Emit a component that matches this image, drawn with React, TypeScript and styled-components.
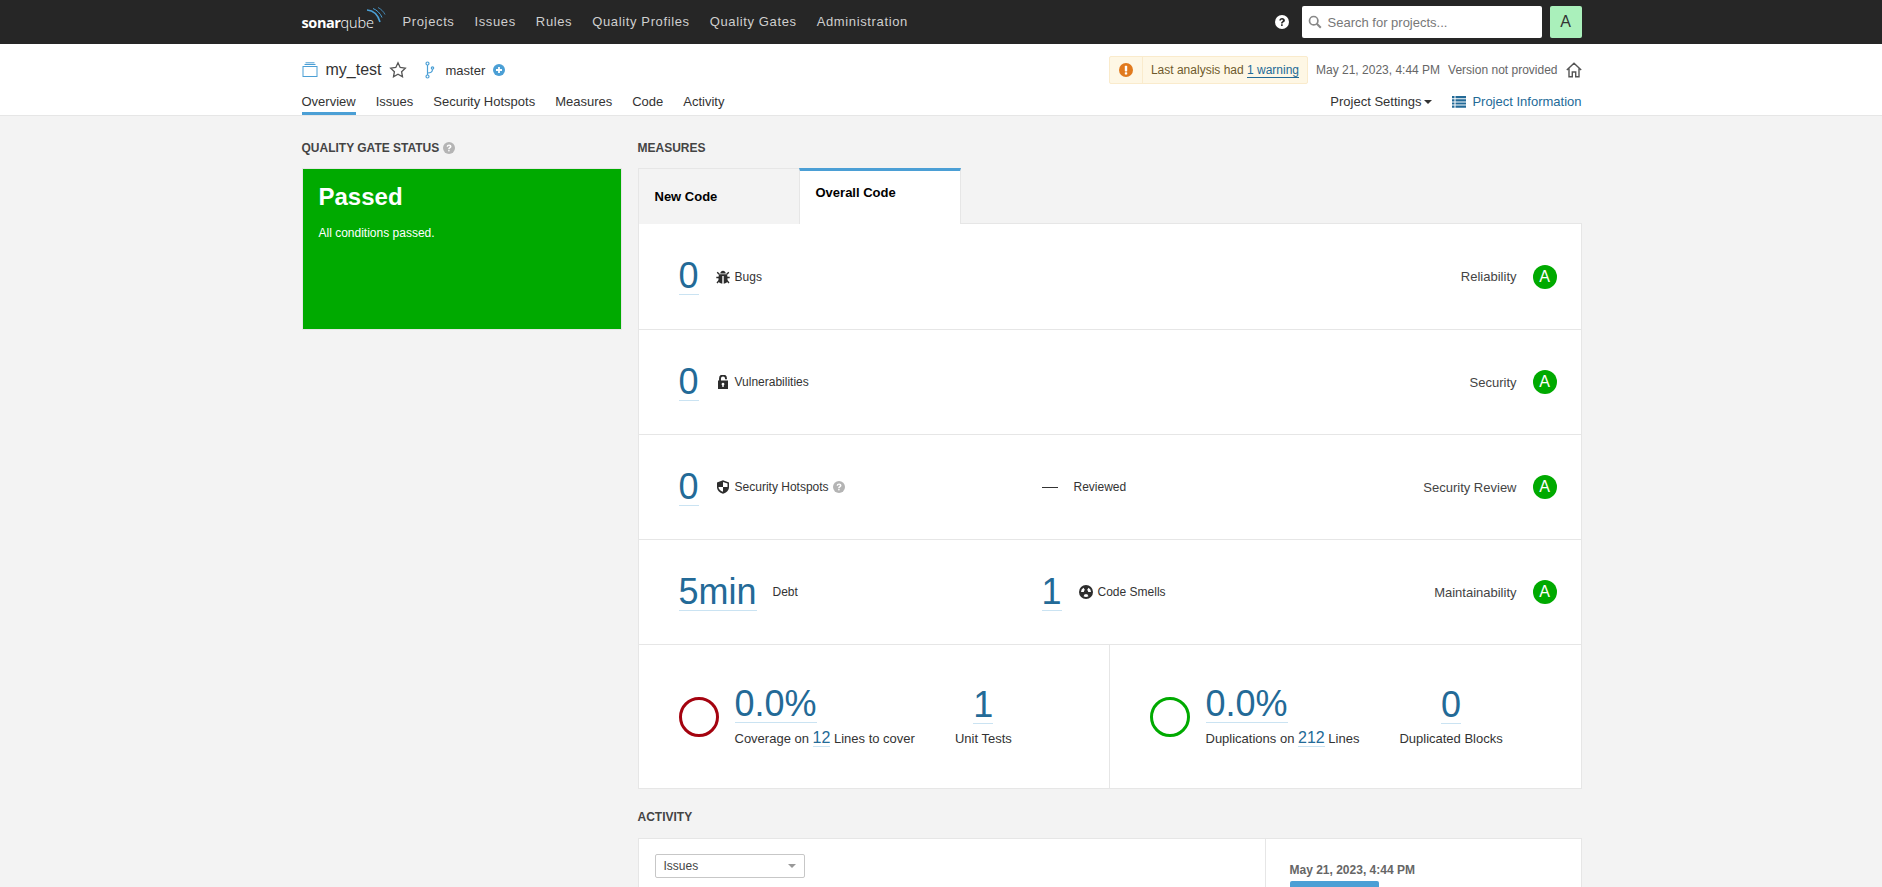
import React from "react";
import styled, { createGlobalStyle } from "styled-components";

const Global = createGlobalStyle`
  html, body { margin: 0; padding: 0; height: 887px; overflow: hidden; background: #f3f3f3; }
  body { font-family: "Liberation Sans", Arial, sans-serif; font-size: 12px; color: #333; }
  * { box-sizing: border-box; }
`;

const Wrap = styled.div`width: 1280px; margin-left: 301.5px;`;
const TopBar = styled.div`height: 44px; background: #262626;`;
const TopInner = styled(Wrap)`display: flex; align-items: center; height: 44px;`;
const Logo = styled.div`position: relative; display: flex; align-items: baseline; width: 83px; height: 44px; margin-right: 8px; padding-top: 14px; color: #fff; font-family: "Open Sans", sans-serif; font-size: 14.5px; line-height: 18px; letter-spacing: -0.4px;`;
const LogoSonar = styled.span`font-weight: 700;`;
const LogoQube = styled.span`font-weight: 300; letter-spacing: -0.1px;`;
const Waves = styled.svg`position: absolute; left: 64px; top: 7px;`;
const TopLink = styled.a`padding: 0 10px; font-size: 13px; letter-spacing: 0.63px; color: #cfcfcf; line-height: 44px;`;
const Spacer = styled.div`flex: 1;`;
const Search = styled.div`display: flex; align-items: center; gap: 6px; width: 240px; height: 32px; margin-left: 13px; padding-left: 6px; background: #fff; border-radius: 2px; font-size: 13px; color: #777;`;
const Avatar = styled.div`display: flex; align-items: center; justify-content: center; width: 32px; height: 32px; margin-left: 8px; background: #aaf0bb; border-radius: 2px; font-size: 16px; color: #333;`;

const Header = styled.div`height: 72px; background: #fff; border-bottom: 1px solid #e6e6e6;`;
const HeaderTop = styled.div`display: flex; align-items: center; height: 40px; padding-top: 12px;`;
const ProjectName = styled.span`margin: 0 7px 0 8px; font-size: 16px; color: #333;`;
const BranchIcon = styled.svg`margin-left: 18px;`;
const Branch = styled.span`margin: 0 8px 0 11px; font-size: 13px; color: #333;`;
const Warn = styled.div`display: flex; align-items: center; height: 28px; background: #fef7e5; border: 1px solid #faebcc; border-radius: 2px; color: #6f5a2c; font-size: 12px;`;
const WarnIcon = styled.div`display: flex; align-items: center; justify-content: center; width: 33px; height: 100%; border-right: 1px solid #faebcc;`;
const WarnText = styled.div`padding: 0 8px;`;
const WarnLink = styled.a`color: #236a97; border-bottom: 1px solid #236a97;`;
const Meta = styled.span`margin-left: 8px; color: #666; font-size: 12px;`;
const HomeIcon = styled.svg`margin-left: 8px;`;
const HeaderNav = styled.div`display: flex; align-items: flex-end; height: 31px;`;
const Tab = styled.a<{ $active?: boolean }>`
  height: 30px; margin-right: 20px; padding-top: 9px; font-size: 13px; color: #333;
  border-bottom: 3px solid ${(p) => (p.$active ? "#4b9fd5" : "transparent")};
`;
const SettingsLink = styled.span`display: flex; align-items: center; gap: 3px; height: 30px; margin-right: 20px; padding-top: 3px; font-size: 13px; color: #333;`;
const Caret = styled.span`width: 0; height: 0; border-left: 4px solid transparent; border-right: 4px solid transparent; border-top: 4px solid #333;`;
const InfoLink = styled.span`display: flex; align-items: center; gap: 6px; height: 30px; padding-top: 3px; font-size: 13px; color: #236a97;`;

const Main = styled(Wrap)`display: flex; gap: 16px; padding-top: 25px;`;
const Left = styled.div`width: 320px; flex: none;`;
const Right = styled.div`width: 944px; flex: none;`;
const Title = styled.h2`display: flex; align-items: center; gap: 4px; height: 14px; margin: 0; font-size: 12px; font-weight: 700; color: #444; text-transform: uppercase;`;
const Gate = styled.div`height: 162px; margin-top: 13px; padding: 14px 16px; background: #00aa00; border: 1px solid #e6e6e6; color: #fff;`;
const GateTitle = styled.div`font-size: 24px; font-weight: 700; line-height: 28px;`;
const GateText = styled.div`margin-top: 14px; font-size: 12px; line-height: 16px;`;

const Tabs = styled.div`display: flex; height: 56px; margin-top: 13px;`;
const PeriodTab = styled.div<{ $active?: boolean }>`
  width: 162px;
  height: 56px;
  padding: ${(p) => (p.$active ? "14px 16px" : "20px 16px")};
  margin-left: ${(p) => (p.$active ? "-1px" : "0")};
  position: relative;
  z-index: ${(p) => (p.$active ? 1 : 0)};
  font-size: 13px; font-weight: 700; line-height: 16px; color: #000;
  background: ${(p) => (p.$active ? "#fff" : "#f3f3f3")};
  border: 1px solid #e6e6e6;
  border-bottom: none;
  border-top: ${(p) => (p.$active ? "3px solid #4b9fd5" : "1px solid #e6e6e6")};
`;
const Card = styled.div`background: #fff; border: 1px solid #e6e6e6; margin-top: -1px;`;
const Row = styled.div`display: flex; align-items: center; height: 105px; padding: 0 24px 0 40px; border-bottom: 1px solid #e6e6e6; &:first-child { height: 106px; }`;
const Col = styled.div`display: flex; align-items: center; width: 363px; flex: none;`;
const Value = styled.a`display: inline-block; font-size: 36px; line-height: 36px; color: #236a97; border-bottom: 1px solid #cae3f2;`;
const BigValue = styled(Value)`align-self: flex-start;`;
const ValueIcon = styled.svg`flex: none; margin-left: 17px; margin-right: 5px;`;
const Label = styled.span`font-size: 12px; color: #333;`;
const DebtLabel = styled(Label)`margin-left: 16px;`;
const InlineHelp = styled.span`display: inline-flex; margin-left: 4px;`;
const Dash = styled.span`display: inline-block; width: 16px; height: 1px; margin-right: 16px; background: #333;`;
const RatingLabel = styled.span`margin-left: auto; margin-right: 16px; font-size: 13px; color: #444;`;
const Rating = styled.span`display: flex; align-items: center; justify-content: center; width: 24px; height: 24px; border-radius: 50%; background: #00aa00; color: #fff; font-size: 16px;`;
const Bottom = styled.div`display: flex; height: 143px;`;
const Half = styled.div`display: flex; align-items: center; width: calc(50% - 1px); padding-left: 40px; & + & { flex: 1; border-left: 1px solid #e6e6e6; }`;
const GateCircle = styled.svg`flex: none;`;
const Big = styled.div`display: flex; flex-direction: column; margin-left: 16px; margin-top: 2px; flex: none;`;
const Sub = styled.div`margin-top: 5px; font-size: 13px; line-height: 20px; color: #333; white-space: nowrap;`;
const SubLink = styled.a`font-size: 16px; color: #236a97; border-bottom: 1px solid #cae3f2;`;
const Small = styled.div`display: flex; flex-direction: column; align-items: center; margin-left: 40px;`;
const SmallSub = styled.div`margin-top: 7px; font-size: 13px; line-height: 16px; color: #333; white-space: nowrap;`;

const ActivityTitle = styled(Title)`margin-top: 21px;`;
const ActivityCard = styled.div`display: flex; height: 300px; margin-top: 14px; background: #fff; border: 1px solid #e6e6e6;`;
const ActivityLeft = styled.div`width: 627px; padding: 15px 16px; border-right: 1px solid #e6e6e6;`;
const Select = styled.div`display: flex; align-items: center; justify-content: space-between; width: 150px; height: 24px; padding: 0 8px; border: 1px solid #c7c7c7; border-radius: 2px; font-size: 12px; color: #444;`;
const SelectCaret = styled.span`width: 0; height: 0; border-left: 4px solid transparent; border-right: 4px solid transparent; border-top: 4px solid #999;`;
const ActivityRight = styled.div`padding: 23px 24px;`;
const ActivityDate = styled.div`font-size: 12px; line-height: 16px; font-weight: 700; color: #666;`;
const Badge = styled.div`display: inline-block; margin-top: 3px; padding: 3px 9px; background: #4b9fd5; border-radius: 2px; color: #fff; font-size: 13px;`;

const Help = ({ size = 12, color = "#b4b4b4", fg = "#fff" }: { size?: number; color?: string; fg?: string }) => (
  <svg width={size} height={size} viewBox="0 0 16 16">
    <circle cx="8" cy="8" r="8" fill={color} />
    <path d="M4.900 6.200C5 4.400 6.300 3.300 8.100 3.300c1.900 0 3.200 1.100 3.200 2.700 0 1.100-.5 1.800-1.500 2.400-.8.5-1 .8-1 1.400H6.900c0-1.200.3-1.800 1.200-2.400.7-.5 1-.8 1-1.300 0-.6-.4-1-1.100-1-.8 0-1.200.4-1.300 1.200z" fill={fg} />
    <rect x="6.900" y="10.600" width="1.900" height="1.900" fill={fg} />
  </svg>
);

const QGCircle = ({ color }: { color: string }) => (
  <GateCircle width="40" height="40" viewBox="0 0 40 40">
    <circle cx="20" cy="20" r="18.500" fill="none" stroke={color} strokeWidth="3" />
  </GateCircle>
);

const MeasureRow = ({ children, rating }: { children: React.ReactNode; rating: string }) => (
  <Row>
    {children}
    <RatingLabel>{rating}</RatingLabel>
    <Rating>A</Rating>
  </Row>
);

export default function App() {
  return (
    <>
      <Global />
      <TopBar>
        <TopInner>
          <Logo>
            <LogoSonar>sonar</LogoSonar>
            <LogoQube>qube</LogoQube>
            <Waves width="22" height="20" viewBox="0 0 22 20" fill="none">
              <path d="M1 3c6 .5 11 4.500 13 12" stroke="#4b9fd5" strokeWidth="1.600" />
              <path d="M7 1.500c4 1.500 7.500 5 9 9" stroke="#4b9fd5" strokeWidth="1" />
              <path d="M12 .5c3 1.500 5.500 4 7 7" stroke="#4b9fd5" strokeWidth="0.800" />
            </Waves>
          </Logo>
          <TopLink>Projects</TopLink>
          <TopLink>Issues</TopLink>
          <TopLink>Rules</TopLink>
          <TopLink>Quality Profiles</TopLink>
          <TopLink>Quality Gates</TopLink>
          <TopLink>Administration</TopLink>
          <Spacer />
          <Help size={14} color="#fff" fg="#262626" />
          <Search>
            <svg width="14" height="14" viewBox="0 0 14 14" fill="none">
              <circle cx="5.700" cy="5.700" r="4.200" stroke="#888" strokeWidth="1.700" />
              <path d="M8.800 8.800l4 4" stroke="#888" strokeWidth="2" />
            </svg>
            Search for projects...
          </Search>
          <Avatar>A</Avatar>
        </TopInner>
      </TopBar>
      <Header>
        <Wrap>
          <HeaderTop>
            <svg width="16" height="16" viewBox="0 0 16 16" fill="none" stroke="#4b9fd5" strokeWidth="1">
              <rect x="1" y="4.500" width="14" height="10" />
              <path d="M2.500 2.500h11M3.500 .8h9" />
            </svg>
            <ProjectName>my_test</ProjectName>
            <svg width="18" height="18" viewBox="0 0 18 18" fill="none" stroke="#555" strokeWidth="1.300">
              <path d="M9 1.800l2.200 4.700 5.100.7-3.700 3.500.9 5.100L9 13.300l-4.500 2.500.9-5.100L1.700 7.200l5.100-.7z" />
            </svg>
            <BranchIcon width="10" height="18" viewBox="0 0 10 18" fill="none" stroke="#4b9fd5" strokeWidth="1.200">
              <circle cx="2.500" cy="2.500" r="1.500" />
              <circle cx="2.500" cy="15.500" r="1.500" />
              <circle cx="7.500" cy="7" r="1.200" />
              <path d="M2.500 4v10M2.500 12c3 0 5-1.500 5-3.800" />
            </BranchIcon>
            <Branch>master</Branch>
            <svg width="12" height="12" viewBox="0 0 12 12">
              <circle cx="6" cy="6" r="6" fill="#4b9fd5" />
              <path d="M6 3v6M3 6h6" stroke="#fff" strokeWidth="1.800" />
            </svg>
            <Spacer />
            <Warn>
              <WarnIcon>
                <svg width="14" height="14" viewBox="0 0 14 14">
                  <circle cx="7" cy="7" r="7" fill="#e17a1e" />
                  <rect x="5.800" y="2.800" width="2.400" height="5.600" rx=".6" fill="#fff" />
                  <rect x="5.800" y="9.200" width="2.400" height="2.200" rx=".5" fill="#fff" />
                </svg>
              </WarnIcon>
              <WarnText>
                Last analysis had <WarnLink>1 warning</WarnLink>
              </WarnText>
            </Warn>
            <Meta>May 21, 2023, 4:44 PM</Meta>
            <Meta>Version not provided</Meta>
            <HomeIcon width="16" height="16" viewBox="0 0 16 16" fill="none" stroke="#555" strokeWidth="1.400">
              <path d="M.8 8L8 1.200 15.200 8M3 6.500v8.300h3.300V10h3.400v4.800H13V6.500" />
            </HomeIcon>
          </HeaderTop>
          <HeaderNav>
            <Tab $active>Overview</Tab>
            <Tab>Issues</Tab>
            <Tab>Security Hotspots</Tab>
            <Tab>Measures</Tab>
            <Tab>Code</Tab>
            <Tab>Activity</Tab>
            <Spacer />
            <SettingsLink>Project Settings <Caret /></SettingsLink>
            <InfoLink>
              <svg width="14" height="12" viewBox="0 0 14 12" fill="#236a97">
                <path d="M0 0h2.500v2.200H0zM3.500 0H14v2.200H3.500zM0 3.200h2.500v2.200H0zM3.500 3.200H14v2.200H3.500zM0 6.400h2.500v2.200H0zM3.500 6.400H14v2.200H3.500zM0 9.600h2.500v2.200H0zM3.500 9.600H14v2.200H3.500z" />
              </svg>
              Project Information
            </InfoLink>
          </HeaderNav>
        </Wrap>
      </Header>
      <Main>
        <Left>
          <Title>Quality Gate Status <Help /></Title>
          <Gate>
            <GateTitle>Passed</GateTitle>
            <GateText>All conditions passed.</GateText>
          </Gate>
        </Left>
        <Right>
          <Title>Measures</Title>
          <Tabs>
            <PeriodTab>New Code</PeriodTab>
            <PeriodTab $active>Overall Code</PeriodTab>
          </Tabs>
          <Card>
            <MeasureRow rating="Reliability">
              <Col>
                <Value>0</Value>
                <ValueIcon width="14" height="14" viewBox="0 0 14 14" fill="#2d2d2d">
                  <path d="M4.200 3.400C4.500 1.700 5.600.8 7 .8s2.500.9 2.800 2.600zM3.400 4.200h7.200c.6.800.9 1.800.9 3v3.300c0 1.700-1.500 3-3.800 3.200V6H6.300v7.700C4 13.500 2.500 12.200 2.500 10.500V7.200c0-1.200.3-2.200.9-3z" />
                  <path d="M3.500 4.500L1.200 2.200M10.500 4.500l2.300-2.300M3 7.500H.3M11 7.500h2.700M3.200 10.500l-2.200 2.500M10.800 10.500l2.200 2.500" stroke="#2d2d2d" strokeWidth="1.400" fill="none" />
                </ValueIcon>
                <Label>Bugs</Label>
              </Col>
            </MeasureRow>
            <MeasureRow rating="Security">
              <Col>
                <Value>0</Value>
                <ValueIcon width="14" height="14" viewBox="0 0 14 14" fill="#2d2d2d">
                  <path fillRule="evenodd" d="M2 5.500h10V14H2zM7 7.800a1.400 1.400 0 0 0-.7 2.600V12h1.400v-1.600A1.400 1.400 0 0 0 7 7.800z" />
                  <path d="M4 6V3.500a3 3 0 0 1 6 0v.7" stroke="#2d2d2d" strokeWidth="1.900" fill="none" />
                </ValueIcon>
                <Label>Vulnerabilities</Label>
              </Col>
            </MeasureRow>
            <MeasureRow rating="Security Review">
              <Col>
                <Value>0</Value>
                <ValueIcon width="14" height="14" viewBox="0 0 14 14">
                  <path d="M7 .3l6 2.200v4.500c0 3.300-2.500 5.600-6 6.700-3.500-1.100-6-3.400-6-6.700V2.500z" fill="#2d2d2d" />
                  <path d="M7 2v5h4.500V3.500zM7 7H2.500c0 2.300 1.800 3.800 4.500 4.700z" fill="#fff" />
                </ValueIcon>
                <Label>Security Hotspots</Label>
                <InlineHelp><Help /></InlineHelp>
              </Col>
              <Dash />
              <Label>Reviewed</Label>
            </MeasureRow>
            <MeasureRow rating="Maintainability">
              <Col>
                <Value>5min</Value>
                <DebtLabel>Debt</DebtLabel>
              </Col>
              <Value>1</Value>
              <ValueIcon width="14" height="14" viewBox="0 0 14 14">
                <circle cx="7" cy="7" r="7" fill="#2d2d2d" />
                <path d="M9.500 11.330A5 5 0 0 1 4.500 11.330L5.900 8.900A2.200 2.200 0 0 0 8.100 8.900zM9.500 2.670A5 5 0 0 1 12 7H9.200A2.200 2.200 0 0 0 8.100 5.100zM2 7A5 5 0 0 1 4.500 2.670L5.900 5.100A2.200 2.200 0 0 0 4.800 7z" fill="#fff" />
              </ValueIcon>
              <Label>Code Smells</Label>
            </MeasureRow>
            <Bottom>
              <Half>
                <QGCircle color="#a4030f" />
                <Big>
                  <BigValue>0.0%</BigValue>
                  <Sub>Coverage on <SubLink>12</SubLink> Lines to cover</Sub>
                </Big>
                <Small>
                  <Value>1</Value>
                  <SmallSub>Unit Tests</SmallSub>
                </Small>
              </Half>
              <Half>
                <QGCircle color="#00aa00" />
                <Big>
                  <BigValue>0.0%</BigValue>
                  <Sub>Duplications on <SubLink>212</SubLink> Lines</Sub>
                </Big>
                <Small>
                  <Value>0</Value>
                  <SmallSub>Duplicated Blocks</SmallSub>
                </Small>
              </Half>
            </Bottom>
          </Card>
          <ActivityTitle>Activity</ActivityTitle>
          <ActivityCard>
            <ActivityLeft>
              <Select>Issues <SelectCaret /></Select>
            </ActivityLeft>
            <ActivityRight>
              <ActivityDate>May 21, 2023, 4:44 PM</ActivityDate>
              <Badge>not provided</Badge>
            </ActivityRight>
          </ActivityCard>
        </Right>
      </Main>
    </>
  );
}
